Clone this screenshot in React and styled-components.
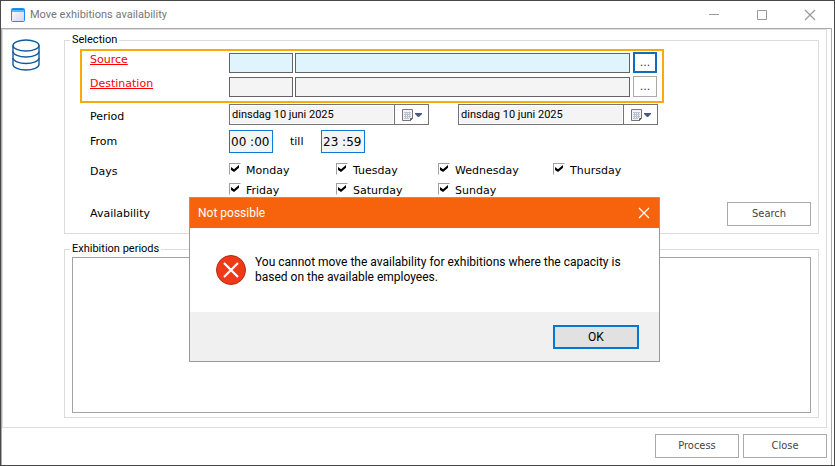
import React from "react";
import styled, { createGlobalStyle } from "styled-components";

const days = [
	"Monday",
	"Tuesday",
	"Wednesday",
	"Thursday",
	"Friday",
	"Saturday",
	"Sunday",
];

const App = () => {
	return (
		<>
			<GlobalStyle />
			<Window>
				<TitleBar>
					<WindowIcon />
					<WindowTitle>Move exhibitions availability</WindowTitle>
					<Caption aria-label="Minimize">
						<svg width="12" height="12" stroke="#999" fill="none">
							<path d="M1 5.5h10" />
						</svg>
					</Caption>
					<Caption aria-label="Maximize">
						<svg width="12" height="12" stroke="#999" fill="none">
							<path d="M1.5 1.5h9v9h-9z" />
						</svg>
					</Caption>
					<Caption aria-label="Close window">
						<svg width="12" height="12" stroke="#999" fill="none" strokeWidth="1.2">
							<path d="M1 1l10 10M11 1L1 11" />
						</svg>
					</Caption>
				</TitleBar>
				<Client>
					<Panel>
						<Side>
							<DatabaseIcon />
						</Side>
						<Main>
							<Group>
								<Legend>Selection</Legend>
								<Highlight>
									<Lookup label="Source" active />
									<Lookup label="Destination" />
								</Highlight>
								<Fields>
									<Row $align="flex-end">
										<Label htmlFor="period-start">Period</Label>
										<Period>
											<DateField id="period-start" label="Start date" />
											<DateField id="period-end" label="End date" />
										</Period>
									</Row>
									<Row $top={5}>
										<Label htmlFor="from">From</Label>
										<Time id="from" defaultValue="00 :00" />
										<Till htmlFor="till">till</Till>
										<Time id="till" defaultValue="23 :59" />
									</Row>
									<Row $top={7} $align="flex-start">
										<DaysLabel>Days</DaysLabel>
										<DayGrid>
											{days.map((day) => (
												<Day key={day}>
													<Check type="checkbox" defaultChecked />
													<DayName>{day}</DayName>
												</Day>
											))}
										</DayGrid>
									</Row>
									<Row $top={2}>
										<Label as="span">Availability</Label>
										<SearchButton>Search</SearchButton>
									</Row>
								</Fields>
							</Group>
							<PeriodsGroup>
								<Legend>Exhibition periods</Legend>
								<Periods aria-label="Exhibition periods" readOnly />
							</PeriodsGroup>
						</Main>
					</Panel>
					<Footer>
						<Button>Process</Button>
						<Button>Close</Button>
					</Footer>
				</Client>
				<Dialog role="alertdialog" aria-labelledby="dialog-title">
					<DialogHeader>
						<DialogTitle id="dialog-title">Not possible</DialogTitle>
						<DialogClose aria-label="Close dialog">
							<svg width="12" height="12" stroke="#fff" fill="none" strokeWidth="1.2">
								<path d="M1 1l10 10M11 1L1 11" />
							</svg>
						</DialogClose>
					</DialogHeader>
					<DialogBody>
						<ErrorIcon />
						<Message>
							You cannot move the availability for exhibitions where the capacity is
							based on the available employees.
						</Message>
					</DialogBody>
					<DialogFooter>
						<OkButton>OK</OkButton>
					</DialogFooter>
				</Dialog>
			</Window>
		</>
	);
};

const Lookup = ({ label, active }) => (
	<Row $align="flex-start">
		<LookupLink href="#">{label}</LookupLink>
		<LookupFields>
			<CodeInput $active={active} aria-label={`${label} code`} />
			<NameInput $active={active} aria-label={`${label} name`} />
			<Browse $active={active} aria-label={`Browse ${label}`}>
				...
			</Browse>
		</LookupFields>
	</Row>
);

const DateField = ({ id, label }) => (
	<DateBox>
		<DateInput id={id} aria-label={label} defaultValue="dinsdag 10 juni 2025" />
		<DateButton aria-label={`Pick ${label}`}>
			<svg width="21" height="14">
				<path
					d="M1.5 1.5h10v9l-2 2h-8z"
					fill="#f3f4f7"
					stroke="#7d7370"
					strokeLinejoin="round"
				/>
				<path d="M9.5 12.5v-2h2" fill="none" stroke="#5c5450" />
				<path
					d="M3 4.5h7M3 6.5h7M3 8.5h7M3 10.5h5M4.5 4v7M6.5 4v7M8.5 4v6"
					stroke="#b9c1d0"
					fill="none"
				/>
				<path d="M14 5h7v1l-3 3h-1l-3-3z" fill="#465a8a" />
			</svg>
		</DateButton>
	</DateBox>
);

const WindowIcon = () => (
	<svg width="14" height="14">
		<defs>
			<linearGradient id="pane" x1="0" y1="0" x2="1" y2="1">
				<stop offset="0" stopColor="#fff" />
				<stop offset="1" stopColor="#cfd3f3" />
			</linearGradient>
		</defs>
		<rect x="0.5" y="0.5" width="13" height="13" rx="1" fill="url(#pane)" stroke="#1e8df0" />
		<path d="M1 1h12v3H1z" fill="#58b8ff" />
		<path d="M1 1.5h12" stroke="#1583e6" />
	</svg>
);

const DatabaseIcon = () => (
	<svg width="28" height="32" fill="none" stroke="#0f5a9c" strokeWidth="1.4">
		<ellipse cx="14" cy="6.5" rx="13" ry="5.5" />
		<path d="M1 6.5v19c0 3 6 5.5 13 5.5s13-2.5 13-5.5v-19" />
		<path d="M1 12.5c0 3 6 5.5 13 5.5s13-2.5 13-5.5" />
		<path d="M1 19c0 3 6 5.5 13 5.5S27 22 27 19" />
	</svg>
);

const ErrorIcon = () => (
	<svg width="30" height="30">
		<circle cx="15" cy="15" r="14.5" fill="#f03a17" stroke="#a92f1c" />
		<path d="M8 8l14 14M22 8L8 22" stroke="#fff" strokeWidth="2.2" />
	</svg>
);

const GlobalStyle = createGlobalStyle`
	* {
		box-sizing: border-box;
	}

	body {
		margin: 0;
		background-color: #fff;
		color: #000;
		font: 11px/16px Roboto, Tahoma, sans-serif;
	}

	button, input, textarea {
		margin: 0;
		padding: 0;
		border-radius: 0;
		outline: none;
		font: inherit;
		color: inherit;
	}
`;

const Window = styled.div`
	position: relative;
	display: flex;
	flex-direction: column;
	min-height: 100vh;
	border: 1px solid #484848;
`;

const TitleBar = styled.header`
	display: flex;
	align-items: center;
	height: 27px;
	padding-left: 10px;
`;

const WindowTitle = styled.h1`
	flex: 1;
	margin: 0 0 0 5px;
	font-size: 11px;
	font-weight: normal;
	color: #777;
`;

const Caption = styled.button`
	display: flex;
	align-items: center;
	justify-content: center;
	width: 48px;
	height: 26px;
	border: none;
	background-color: transparent;
`;

const Client = styled.div`
	flex: 1;
	display: flex;
	flex-direction: column;
	margin-right: 2px;
	border: 1px solid #aaa;
	border-bottom: none;
`;

const Panel = styled.main`
	flex: 1;
	display: flex;
	margin-right: 4px;
	padding: 2px 7px 9px 0;
	border: 1px solid #ddd;
`;

const Side = styled.div`
	width: 61px;
	padding: 7px 0 0 9px;
`;

const Main = styled.div`
	flex: 1;
	display: flex;
	flex-direction: column;
	gap: 7px;
`;

const Group = styled.fieldset`
	min-width: 0;
	margin: 0;
	padding: 1px 7px 7px 15px;
	border: 1px solid #dcdcdc;
`;

const PeriodsGroup = styled(Group)`
	flex: 1;
	display: flex;
	flex-direction: column;
	padding: 0 7px 4px 7px;
`;

const Legend = styled.legend`
	margin-left: -10px;
	padding: 0 2px;

	${PeriodsGroup} & {
		margin-left: -2px;
	}
`;

const Highlight = styled.div`
	display: flex;
	flex-direction: column;
	gap: 3px;
	max-width: 584px;
	padding: 1px 5px 4px 8px;
	border: 2px solid #f9a90c;
`;

const Fields = styled.div`
	padding: 1px 0 0 10px;
`;

const Row = styled.div`
	display: flex;
	align-items: ${(props) => props.$align || "center"};
	margin-top: ${(props) => props.$top || 0}px;
`;

const Label = styled.label`
	width: 139px;
	flex-shrink: 0;
	font-family: "DejaVu Sans", Verdana, sans-serif;
`;

const DaysLabel = styled(Label).attrs({ as: "span" })`
	line-height: 24px;
`;

const LookupLink = styled.a`
	width: 139px;
	flex-shrink: 0;
	font-family: "DejaVu Sans", Verdana, sans-serif;
	color: #f00;
	text-decoration: underline;
`;

const LookupFields = styled.div`
	flex: 1;
	display: flex;
	align-items: flex-end;
`;

const CodeInput = styled.input`
	width: 64px;
	height: 20px;
	margin-right: 2px;
	border: 1px solid #636363;
	background-color: ${(props) => (props.$active ? "#e0f4fe" : "#f4f4f4")};
`;

const NameInput = styled(CodeInput)`
	flex: 1;
	margin-right: 3px;
`;

const Browse = styled.button`
	width: 24px;
	height: 21px;
	border: ${(props) => (props.$active ? "2px solid #0f6cbf" : "1px solid #aaa")};
	background-color: #fff;
	color: #3b2a66;
	font-family: "DejaVu Sans", Verdana, sans-serif;
`;

const Period = styled.div`
	display: flex;
	align-items: center;
	gap: 29px;
`;

const DateBox = styled.div`
	display: flex;
	width: 200px;
	height: 21px;
	border: 1px solid #747474;
`;

const DateInput = styled.input`
	flex: 1;
	min-width: 0;
	padding-left: 1px;
	border: 1px solid #fff;
	background-color: #f4f4f4;
`;

const DateButton = styled.button`
	display: flex;
	align-items: center;
	justify-content: center;
	width: 34px;
	border: none;
	border-left: 1px solid #747474;
	background-color: #fff;
`;

const Time = styled.input`
	width: 44px;
	height: 23px;
	padding-left: 1px;
	border: 1px solid #0f7ad6;
	background-color: #f4f4f4;
	font: 12px "DejaVu Sans", Verdana, sans-serif;
`;

const Till = styled(Label)`
	width: 48px;
	padding-left: 17px;
`;

const DayGrid = styled.div`
	display: grid;
	grid-template-columns: 107px 102px 115px auto;
	grid-auto-rows: 20px;
`;

const Day = styled.label`
	display: flex;
	align-items: flex-end;
	gap: 5px;
	font-family: "DejaVu Sans", Verdana, sans-serif;
`;

const DayName = styled.span`
	line-height: 18px;
`;

const Check = styled.input`
	appearance: none;
	width: 12px;
	height: 12px;
	margin-bottom: 5px;
	border: 1px solid #a0a0a0;
	border-right-color: #fff;
	border-bottom-color: #fff;

	&:checked::before {
		content: "";
		display: block;
		width: 8px;
		height: 7px;
		margin: 1px;
		background-color: #000;
		clip-path: polygon(0 30%, 38% 62%, 100% 0, 100% 38%, 38% 100%, 0 70%);
	}
`;

const Button = styled.button`
	width: 84px;
	height: 24px;
	border: 1px solid #aaa;
	background-color: #fff;
	color: #444;
	font-family: "DejaVu Sans Condensed", Tahoma, sans-serif;
`;

const SearchButton = styled(Button)`
	margin-left: auto;
`;

const Periods = styled.textarea`
	flex: 1;
	min-height: 120px;
	border: 1px solid #a3a3a3;
	resize: none;
`;

const Footer = styled.footer`
	display: flex;
	justify-content: flex-end;
	gap: 4px;
	padding: 6px 4px 7px 0;
`;

// floats over the form
const Dialog = styled.section`
	position: absolute;
	top: 196px;
	left: 188px;
	width: 471px;
	border: 1px solid #999;
	background-color: #fff;
	font-size: 12px;
`;

const DialogHeader = styled.div`
	display: flex;
	align-items: center;
	justify-content: space-between;
	height: 30px;
	padding: 0 9px 0 8px;
	background-color: #f7630c;
	color: #fff;
`;

const DialogTitle = styled.h2`
	margin: 0;
	font-size: 12px;
	font-weight: normal;
`;

const DialogClose = styled.button`
	display: flex;
	border: none;
	background-color: transparent;
`;

const DialogBody = styled.div`
	display: flex;
	gap: 9px;
	height: 84px;
	padding: 27px 26px 0;
`;

const Message = styled.p`
	flex: 1;
	margin: 0;
	line-height: 15px;
`;

const DialogFooter = styled.div`
	display: flex;
	justify-content: flex-end;
	padding: 13px 20px 12px;
	background-color: #f0f0f0;
`;

const OkButton = styled.button`
	width: 86px;
	height: 24px;
	border: 2px solid #0078d7;
	background-color: #e1e1e1;
`;

export default App;
